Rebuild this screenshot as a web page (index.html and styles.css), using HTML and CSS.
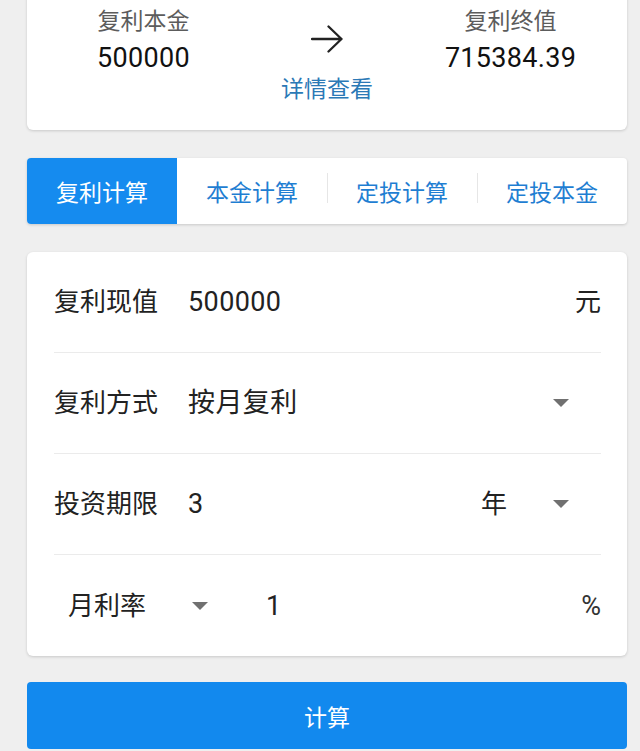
FILE: index.html
```html
<!DOCTYPE html>
<html lang="zh-CN">
<head>
<meta charset="utf-8">
<title>复利计算</title>
<link rel="stylesheet" href="styles.css">
</head>
<body>
<div class="page">
  <div class="card summary">
    <div class="summary-row">
      <div class="col">
        <div class="cap">复利本金</div>
        <div class="num">500000</div>
      </div>
      <div class="arrow">
        <svg width="32" height="28" viewBox="0 0 32 28"><path d="M1 14 H30.5 M17.5 1.5 L30.5 14 L17.5 26.5" fill="none" stroke="#222" stroke-width="2.3" stroke-linecap="round" stroke-linejoin="round"/></svg>
      </div>
      <div class="col">
        <div class="cap">复利终值</div>
        <div class="num">715384.39</div>
      </div>
    </div>
    <div class="detail">详情查看</div>
  </div>

  <div class="card tabs">
    <div class="tab active">复利计算</div>
    <div class="tab">本金计算</div>
    <div class="tab sep">定投计算</div>
    <div class="tab sep">定投本金</div>
  </div>

  <div class="card form">
    <div class="row">
      <div class="label">复利现值</div>
      <div class="value">500000</div>
      <div class="fill"></div>
      <div class="unit">元</div>
    </div>
    <div class="row">
      <div class="label">复利方式</div>
      <div class="value">按月复利</div>
      <div class="fill"></div>
      <div class="caret end"></div>
    </div>
    <div class="row">
      <div class="label">投资期限</div>
      <div class="value">3</div>
      <div class="fill"></div>
      <div class="unit">年</div>
      <div class="caret unit-caret end"></div>
    </div>
    <div class="row last">
      <div class="label short">月利率</div>
      <div class="caret rate-caret"></div>
      <div class="value rate-value">1</div>
      <div class="fill"></div>
      <div class="unit pct">%</div>
    </div>
  </div>

  <button class="calc">计算</button>
</div>
</body>
</html>
```

FILE: styles.css
```css
html, body {
  margin: 0;
  padding: 0;
  background: #efefef;
}
body {
  font-family: Roboto, "Noto Sans CJK SC", "Noto Sans", sans-serif;
  color: #222;
  overflow: hidden;
}
.page {
  padding: 0 13px 0 27px;
  display: flex;
  flex-direction: column;
}
.card {
  background: #fff;
  border-radius: 6px;
  box-shadow: 0 1px 3px rgba(0, 0, 0, 0.16);
}
.summary {
  margin-top: -10px;
  padding: 17px 0 29px;
  display: flex;
  flex-direction: column;
}
.summary-row {
  display: grid;
  grid-template-columns: 233px 1fr 233px;
}
.col {
  display: flex;
  flex-direction: column;
  align-items: center;
}
.cap {
  font-size: 23px;
  line-height: 30px;
  color: #5c5c5c;
}
.num {
  font-size: 27px;
  line-height: 42px;
  color: #111;
  letter-spacing: 0.3px;
}
.arrow {
  display: flex;
  justify-content: center;
  padding-top: 18px;
}
.arrow svg {
  display: block;
}
.detail {
  text-align: center;
  font-size: 23px;
  line-height: 22px;
  color: #2b79b6;
}
.tabs {
  margin-top: 28px;
  height: 66px;
  display: grid;
  grid-template-columns: repeat(4, 1fr);
  overflow: hidden;
  border-radius: 4px;
}
.tab {
  display: flex;
  align-items: center;
  justify-content: center;
  font-size: 23px;
  color: #1f7ed2;
}
.tab.active {
  background: #158bef;
  color: #fff;
}
.tab.sep {
  background: linear-gradient(#e6e6e6, #e6e6e6) left 15px / 1px 30px no-repeat;
}
.form {
  margin-top: 28px;
  padding: 0 26px 0 27px;
}
.row {
  height: 100px;
  display: flex;
  align-items: center;
  border-bottom: 1px solid #ebebeb;
}
.row.last {
  border-bottom: none;
  height: 101px;
}
.label, .value, .unit {
  line-height: 36px;
}
.label {
  width: 134px;
  font-size: 26px;
  color: #222;
  flex: none;
}
.label.short {
  width: auto;
  margin-left: 14px;
}
.value {
  font-size: 27px;
  color: #222;
  letter-spacing: 0.4px;
}
.fill {
  flex: 1;
}
.unit {
  font-size: 26px;
  color: #222;
}
.unit.pct {
  font-size: 27px;
  color: #333;
}
.caret {
  width: 0;
  height: 0;
  border-left: 8px solid transparent;
  border-right: 8px solid transparent;
  border-top: 8px solid #707070;
  flex: none;
}
.caret.end {
  margin-right: 32px;
}
.caret.unit-caret {
  margin-left: 46px;
}
.caret.rate-caret {
  margin-left: 46px;
}
.rate-value {
  margin-left: 58px;
}
.calc {
  margin-top: 26px;
  height: 67px;
  border: none;
  border-radius: 4px;
  background: #1289ee;
  color: #fff;
  font-family: Roboto, "Noto Sans CJK SC", sans-serif;
  font-size: 23px;
  padding: 0;
}
```
